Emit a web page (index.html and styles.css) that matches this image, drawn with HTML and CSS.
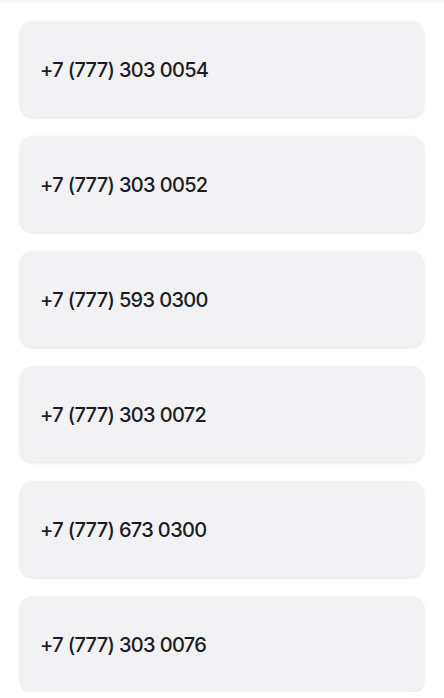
FILE: index.html
```html
<!DOCTYPE html>
<html lang="ru">

<head>
    <meta charset="UTF-8">
    <meta name="viewport" content="width=device-width, initial-scale=1.0">
    <title>Телефоны</title>
    <link rel="stylesheet" href="styles.css">
</head>

<body>
    <div class="top-edge"></div>

    <div class="phone-list">
        <a class="phone-card" href="tel:+77773030054">+7 (777) 303 0054</a>
        <a class="phone-card" href="tel:+77773030052">+7 (777) 303 0052</a>
        <a class="phone-card" href="tel:+77775930300">+7 (777) 593 0300</a>
        <a class="phone-card" href="tel:+77773030072">+7 (777) 303 0072</a>
        <a class="phone-card" href="tel:+77776730300">+7 (777) 673 0300</a>
        <a class="phone-card" href="tel:+77773030076">+7 (777) 303 0076</a>
    </div>
</body>

</html>
```

FILE: styles.css
```css
body {
    font-family: 'Inter', 'Roboto', sans-serif;
    background-color: #fff;
    margin: 0;
    padding: 0;
}

.top-edge {
    height: 4px;
    background: linear-gradient(#f3f3f5, #fff);
}

.phone-list {
    display: flex;
    flex-direction: column;
    gap: 19px;
    padding: 17px 20px 0 20px;
}

.phone-card {
    display: flex;
    align-items: center;
    height: 96px;
    box-sizing: border-box;
    padding: 2px 20px 0 20px;
    background-color: #f2f2f5;
    border-radius: 13px;
    box-shadow: 0 1px 3px rgba(0, 0, 0, 0.12);
    color: #1c1c1e;
    text-decoration: none;
    font-size: 20px;
    font-weight: 500;
    letter-spacing: -0.65px;
}
```
